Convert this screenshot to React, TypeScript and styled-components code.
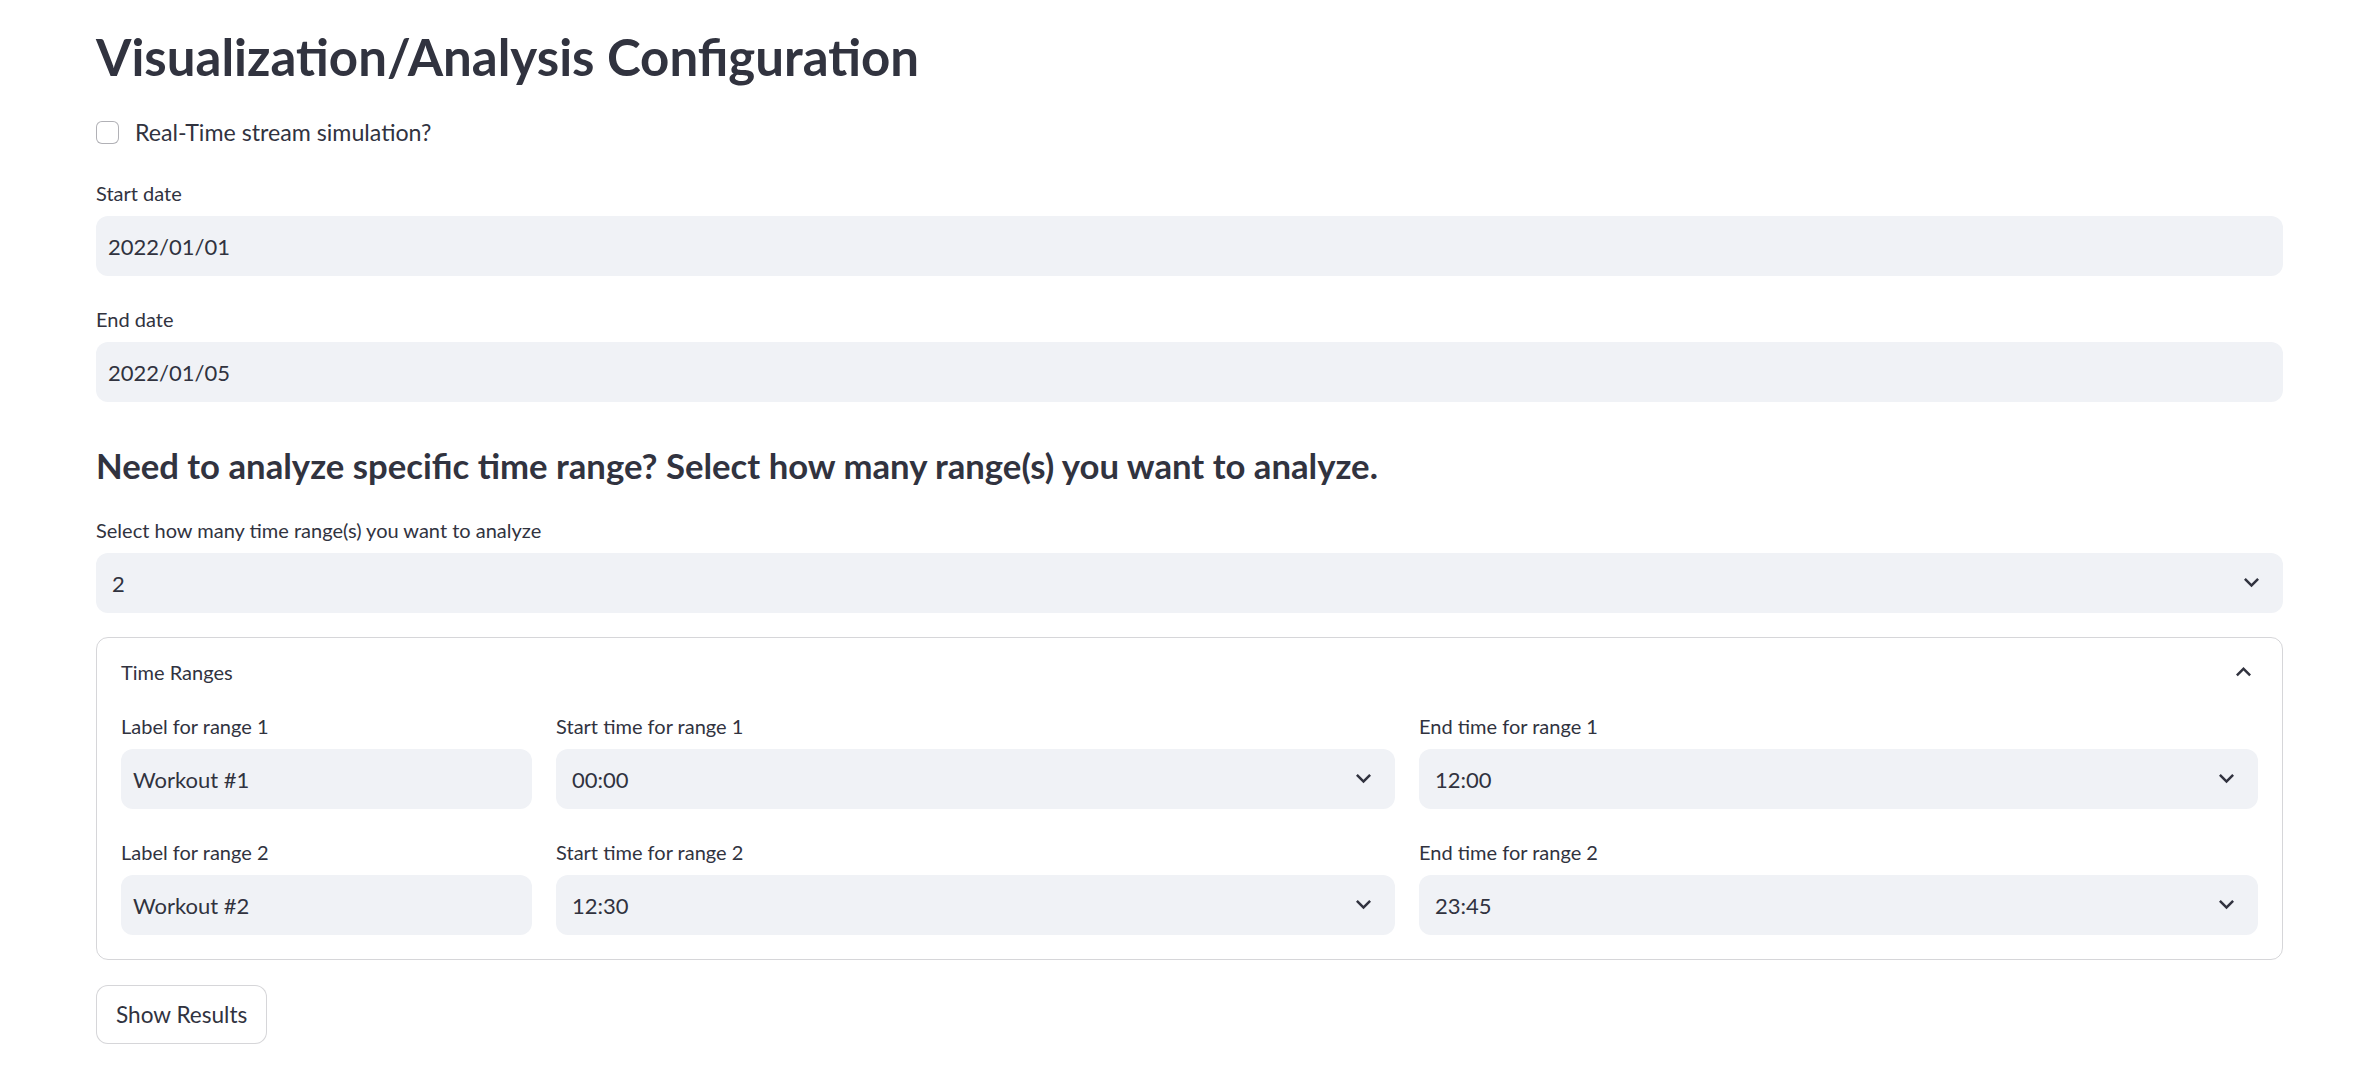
import React from "react";
import styled, { createGlobalStyle } from "styled-components";

const GlobalStyle = createGlobalStyle`
  html, body {
    margin: 0;
    padding: 0;
    background: #ffffff;
  }
  body {
    font-family: Lato, "Noto Sans", sans-serif;
    color: #31333f;
    -webkit-font-smoothing: antialiased;
  }
  * { box-sizing: border-box; }
`;

const Page = styled.main`
  display: flex;
  flex-direction: column;
  padding: 26px 95px 0 96px;
`;

const Title = styled.h1`
  margin: 0;
  font-size: 51px;
  line-height: 62px;
  font-weight: 700;
  color: #31333f;
`;

const CheckRow = styled.label`
  margin-top: 32px;
  display: flex;
  align-items: center;
  gap: 16px;
  height: 24px;
  font-size: 23.2px;
  cursor: pointer;
`;

const CheckBox = styled.span`
  width: 23px;
  height: 23px;
  border: 1px solid rgba(49, 51, 63, 0.38);
  border-radius: 6px;
  background: #ffffff;
  flex: none;
`;

const Field = styled.div<{ $mt?: number }>`
  display: flex;
  flex-direction: column;
  margin-top: ${(p) => p.$mt ?? 0}px;
  min-width: 0;
`;

const Label = styled.div`
  font-size: 20px;
  line-height: 28px;
  margin-bottom: 9px;
  white-space: nowrap;
`;

const InputBox = styled.div<{ $select?: boolean }>`
  height: 60px;
  background: #f0f2f6;
  border-radius: 12px;
  display: flex;
  align-items: center;
  justify-content: space-between;
  padding: ${(p) => (p.$select ? "0 24px 0 16px" : "0 12px")};
  font-size: 22px;
  color: #31333f;
`;

const SubHeading = styled.h3`
  margin: 42px 0 0;
  font-size: 34.7px;
  line-height: 44px;
  font-weight: 700;
  color: #31333f;
`;

const Expander = styled.section`
  margin-top: 24px;
  border: 1px solid rgba(49, 51, 63, 0.2);
  border-radius: 12px;
`;

const ExpanderHeader = styled.div`
  display: flex;
  align-items: center;
  justify-content: space-between;
  padding: 20px 31px 0 24px;
  height: 48px;
  font-size: 20px;
  line-height: 28px;
`;

const RangeGrid = styled.div`
  display: grid;
  grid-template-columns: 0.98fr 2fr 2fr;
  column-gap: 24px;
  row-gap: 29px;
  padding: 26px 24px 24px;
`;

const Button = styled.button`
  align-self: flex-start;
  margin-top: 25px;
  height: 59px;
  padding: 0 19px;
  background: #ffffff;
  border: 1px solid rgba(49, 51, 63, 0.2);
  border-radius: 12px;
  font-family: Lato, "Noto Sans", sans-serif;
  font-size: 22.6px;
  color: #31333f;
  cursor: pointer;
`;

const ChevronDown = () => (
  <svg width="15" height="9.3" viewBox="6 8.59 12 7.41" fill="#31333f" aria-hidden="true">
    <path d="M16.59 8.59L12 13.17 7.41 8.59 6 10l6 6 6-6z" />
  </svg>
);

const ChevronUp = () => (
  <svg width="15" height="9.3" viewBox="6 8 12 7.41" fill="#31333f" aria-hidden="true">
    <path d="M12 8l-6 6 1.41 1.41L12 10.83l4.59 4.58L18 14z" />
  </svg>
);

type FieldProps = { label: string; value: string; select?: boolean; mt?: number };

const FormField = ({ label, value, select, mt }: FieldProps) => (
  <Field $mt={mt}>
    <Label>{label}</Label>
    <InputBox $select={select}>
      <span>{value}</span>
      {select && <ChevronDown />}
    </InputBox>
  </Field>
);

const ranges = [
  { label: "Workout #1", start: "00:00", end: "12:00" },
  { label: "Workout #2", start: "12:30", end: "23:45" },
];

export default function App() {
  return (
    <>
      <GlobalStyle />
      <Page>
        <Title>Visualization/Analysis Configuration</Title>
        <CheckRow>
          <CheckBox />
          <span>Real-Time stream simulation?</span>
        </CheckRow>
        <FormField mt={35} label="Start date" value="2022/01/01" />
        <FormField mt={29} label="End date" value="2022/01/05" />
        <SubHeading>
          Need to analyze specific time range? Select how many range(s) you want to analyze.
        </SubHeading>
        <FormField mt={28} label="Select how many time range(s) you want to analyze" value="2" select />
        <Expander>
          <ExpanderHeader>
            <span>Time Ranges</span>
            <ChevronUp />
          </ExpanderHeader>
          <RangeGrid>
            {ranges.map((r, i) => (
              <React.Fragment key={i}>
                <FormField label={`Label for range ${i + 1}`} value={r.label} />
                <FormField label={`Start time for range ${i + 1}`} value={r.start} select />
                <FormField label={`End time for range ${i + 1}`} value={r.end} select />
              </React.Fragment>
            ))}
          </RangeGrid>
        </Expander>
        <Button>Show Results</Button>
      </Page>
    </>
  );
}
